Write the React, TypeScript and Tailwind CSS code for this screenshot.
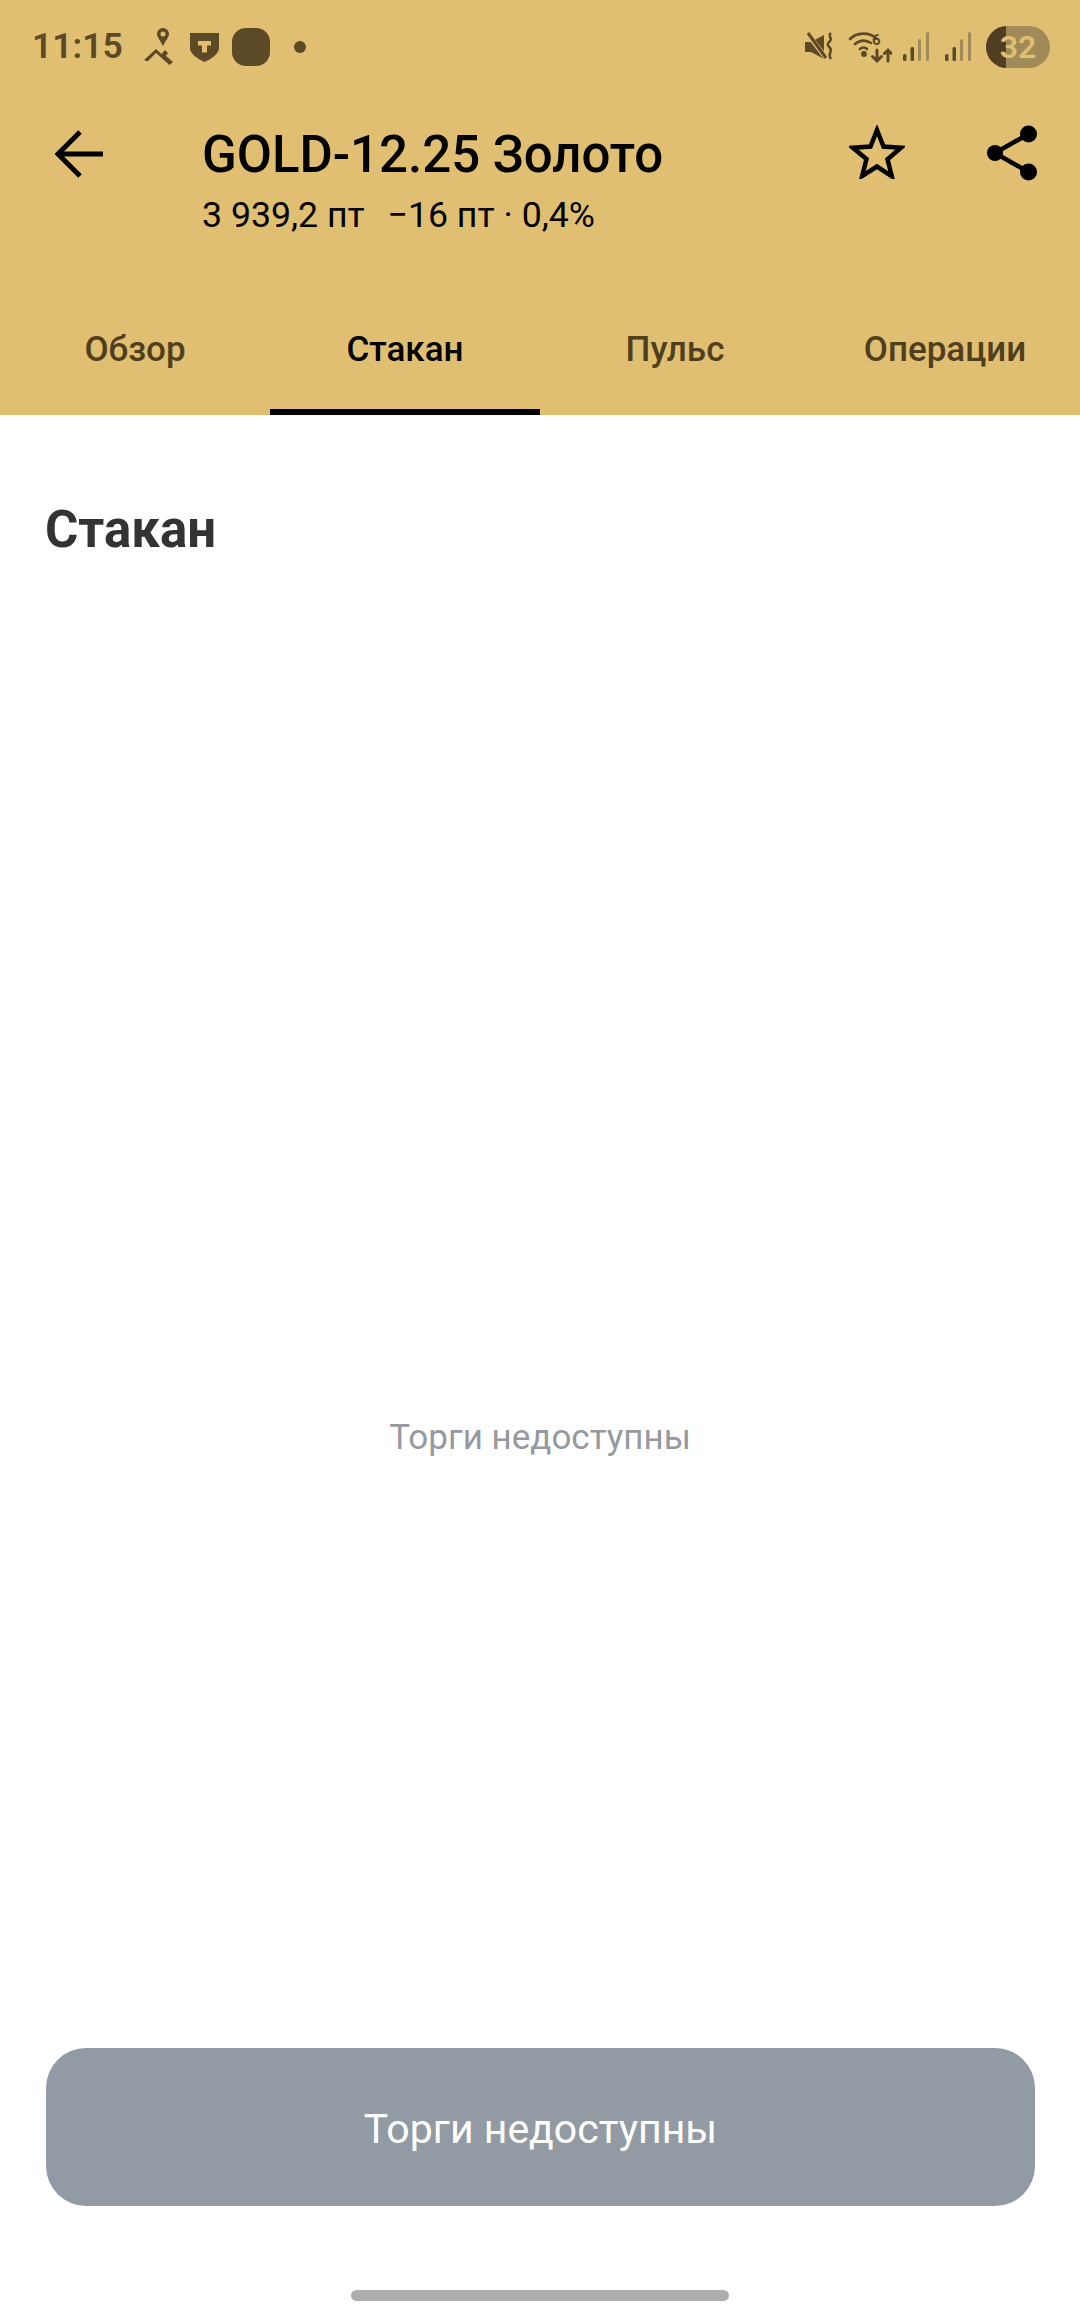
const ink = '#5c4a26';

function StatusLeft() {
    return (
        <div className="flex items-center">
            <span className="ml-[32px] w-[90px] text-[35.500px] leading-none font-semibold text-[#5c4a26]">11:15</span>
            <svg className="ml-[22px]" width="30" height="38" viewBox="0 0 30 38" fill={ink}>
                <path fillRule="evenodd" d="M19 0a6 6 0 0 1 6 6c0 3-3 6-6 12-3-6-6-9-6-12a6 6 0 0 1 6-6zm0 3.500a2.500 2.500 0 1 0 0 5 2.500 2.500 0 0 0 0-5z" />
                <path d="M0 32l12-11 5.500 5 3.500-4 3 3-2 3 7 6-3.500 3-9.500-8.500-4-3.500-8.500 8.500z" />
            </svg>
            <svg className="ml-[16px]" width="30" height="30" viewBox="0 0 30 30">
                <path d="M0 1h29v15c0 6-8 11-14.500 14C8 27 0 22 0 16z" fill={ink} />
                <path d="M8 9h13v4.500h-4v7h-5v-7H8z" fill="#e0bf72" />
            </svg>
            <div className="ml-[12px] h-[38px] w-[38px] rounded-[14px] bg-[#5c4a26]" />
            <div className="ml-[24px] h-[12px] w-[12px] rounded-full bg-[#5c4a26]" />
        </div>
    );
}

function Bars() {
    return (
        <svg width="28" height="30" viewBox="0 0 28 30">
            <rect x="1" y="22" width="3.500" height="7" rx="1.500" fill={ink} />
            <rect x="8.500" y="15" width="3.500" height="14" rx="1.500" fill={ink} />
            <rect x="16" y="7" width="3" height="22" rx="1.500" fill="#a08a55" />
            <rect x="24" y="0" width="3" height="29" rx="1.500" fill="#a08a55" />
        </svg>
    );
}

function StatusRight() {
    return (
        <div className="flex items-center">
            <svg width="30" height="30" viewBox="0 0 30 30" fill={ink}>
                <path d="M0 10h6l13-7v24L6 20H0z" />
                <path d="M2 1l19 25" stroke="#e0bf72" strokeWidth="5" />
                <path d="M3 1l18 25" stroke={ink} strokeWidth="3" />
                <path d="M26 1c-4 3 2 5-1 8s-3 4 0 7-3 6 1 11" stroke={ink} strokeWidth="2.500" fill="none" />
            </svg>
            <svg className="ml-[11px]" width="46" height="34" viewBox="0 0 46 34" fill="none" stroke={ink} strokeWidth="2.600" strokeLinecap="round">
                <path d="M4 9c7-7 19-7 26-1" />
                <path d="M9 14c5-4 11-4 16-1" />
                <path d="M14 19c2-2 5-2 7 0" />
                <circle cx="18" cy="24" r="1.600" fill={ink} />
                <text x="26" y="15" fontSize="15" fontWeight="700" fill={ink} stroke="none" fontFamily="Roboto, sans-serif">6</text>
                <path d="M31 20v11m-4.500-4.500L31 31l4.500-4.500" strokeWidth="3" />
                <path d="M42 31V20m-3.500 3.500L42 20l3.500 3.500" strokeWidth="3" />
            </svg>
            <div className="ml-[10px]"><Bars /></div>
            <div className="ml-[14px]"><Bars /></div>
            <div className="relative ml-[14px] h-[42px] w-[64px] overflow-hidden rounded-full bg-[#9f8a58]">
                <div className="absolute inset-y-0 left-0 w-[20px] bg-[#4f3f20]" />
                <span className="absolute inset-0 flex items-center justify-center text-[32px] leading-none font-semibold text-[#e0bf72]">32</span>
            </div>
        </div>
    );
}

function Tab({ label, active }: { label: string; active?: boolean }) {
    return (
        <div className={`flex h-full flex-1 items-center justify-center border-b-[6px] pt-[6px] text-[35px] font-medium ${active ? 'border-black text-black' : 'border-transparent text-[#4f3f1c]'}`}>
            {label}
        </div>
    );
}

export default function App() {
    return (
        <div className="flex h-[2316px] w-[1080px] flex-col overflow-hidden bg-white font-['Roboto',sans-serif]">
            <div className="bg-[#e0bf72]">
                <div className="flex h-[94px] items-center justify-between pr-[30px]">
                    <StatusLeft />
                    <StatusRight />
                </div>
                <div className="flex h-[122px] items-start">
                    <svg className="mt-[35px] ml-[55px]" width="50" height="50" viewBox="0 0 50 50" fill="none" stroke="black" strokeWidth="5">
                        <path d="M48 25H4" />
                        <path d="M25 3L3 25l22 22" />
                    </svg>
                    <div className="ml-[97px] flex-1 pt-[28px]">
                        <div className="text-[51px] leading-[66px] font-medium text-black">GOLD-12.25 Золото</div>
                        <div className="mt-[4px] whitespace-pre text-[35.700px] leading-[46px] text-black">3 939,2 пт  <span className="ml-[5px]">−16 пт · 0,4%</span></div>
                    </div>
                    <svg className="mt-[31px]" width="56" height="54" viewBox="0 0 56 54" fill="none" stroke="black" strokeWidth="4.500">
                        <path d="M28 5l6.500 16.500 17.500 1.300-13.500 11.500 4.300 17L28 41.500 13.200 51l4.300-17L4 22.800l17.500-1.300z" />
                    </svg>
                    <svg className="mt-[31px] mr-[41px] ml-[82px]" width="52" height="56" viewBox="0 0 52 56" fill="black">
                        <circle cx="8" cy="28" r="8" />
                        <circle cx="41.500" cy="9" r="8.500" />
                        <circle cx="41.500" cy="47" r="8.500" />
                        <path d="M8 28L41.500 9M8 28l33.500 19" stroke="black" strokeWidth="4.500" />
                    </svg>
                </div>
                <div className="flex h-[199px] items-end">
                    <div className="flex h-[129px] w-full">
                        <Tab label="Обзор" />
                        <Tab label="Стакан" active />
                        <Tab label="Пульс" />
                        <Tab label="Операции" />
                    </div>
                </div>
            </div>
            <div className="flex flex-1 flex-col">
                <h2 className="mt-[86px] ml-[45px] text-[51px] leading-[58px] font-bold text-[#333333]">Стакан</h2>
                <div className="flex flex-1 items-center justify-center pt-[270px] text-[35px] text-[#96999e]">Торги недоступны</div>
                <button className="mr-[45px] ml-[46px] flex h-[158px] items-center justify-center rounded-[40px] bg-[#929aa3] pt-[6px] text-[41px] text-white">Торги недоступны</button>
                <div className="mt-[84px] mb-[15px] h-[11px] w-[378px] self-center rounded-full bg-[#adadad]" />
            </div>
        </div>
    );
}
